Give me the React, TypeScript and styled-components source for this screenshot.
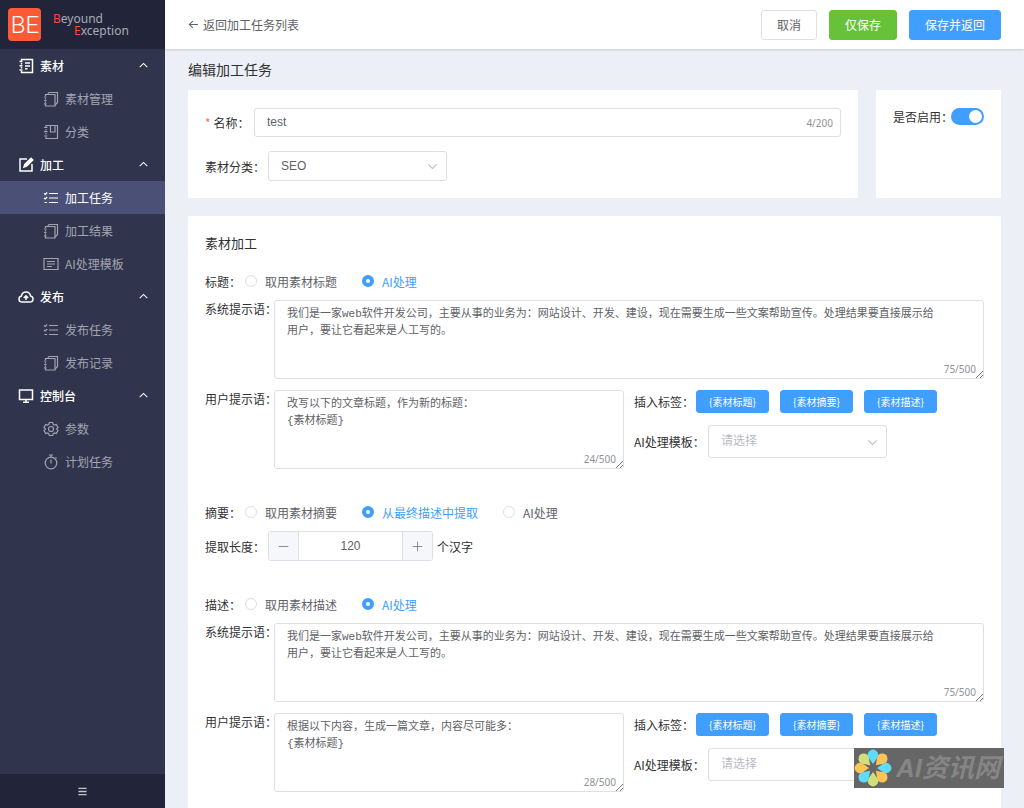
import React, { useId, useState } from "react";
import styled, { createGlobalStyle, css } from "styled-components";

const sans = `"Noto Sans CJK SC", sans-serif`;
const latin = `"Liberation Sans", "Noto Sans CJK SC", sans-serif`;
const mono = `"Liberation Mono", "Noto Sans CJK SC", monospace`;

const GlobalStyle = createGlobalStyle`
  *, *::before, *::after { box-sizing: border-box; }
  body { margin: 0; font: 12px/17px ${sans}; color: #303133; background: #eceff5; }
  button, input, select, textarea { font: inherit; color: inherit; margin: 0; }
  input { font-family: ${latin}; }
`;

const Shell = styled.div`
  display: flex;
  height: 100vh;
  overflow: hidden;
`;

/* ---------- sidebar ---------- */

const Sidebar = styled.aside`
  display: flex;
  flex-direction: column;
  flex: none;
  width: 165px;
  background: #30344d;
  color: #fff;
`;

const Brand = styled.div`
  display: flex;
  align-items: center;
  gap: 12px;
  height: 49px;
  padding: 0 8px;
  background: #22253a;
`;

const Logo = styled.svg`
  width: 33px;
  height: 33px;
  flex: none;
`;

const BrandName = styled.div`
  font: 12px/12px "Noto Sans", sans-serif;
  color: #a9abb5;
  span { display: block; }
  span + span { padding-left: 21px; }
  b { font-weight: 400; color: #f04b3c; }
`;

const Menu = styled.nav`
  flex: 1;
  overflow: hidden;
`;

const GroupButton = styled.button`
  display: flex;
  align-items: center;
  gap: 6px;
  width: 100%;
  height: 33px;
  padding: 0 16px 0 18px;
  border: 0;
  background: none;
  color: #fff;
  font-weight: 500;
  cursor: pointer;
  span { flex: 1; text-align: left; }
`;

const MenuLink = styled.a<{ $active?: boolean }>`
  display: flex;
  align-items: center;
  gap: 6px;
  height: 33px;
  padding-left: 43px;
  text-decoration: none;
  color: ${(p) => (p.$active ? "#fff" : "#a2a4b0")};
  background: ${(p) => (p.$active ? "#4b5176" : "transparent")};
`;

const CollapseButton = styled.button`
  display: flex;
  align-items: center;
  justify-content: center;
  height: 34px;
  border: 0;
  background: #22253a;
  color: #c3c4ca;
`;

const Svg = styled.svg<{ $size: number }>`
  width: ${(p) => p.$size}px;
  height: ${(p) => p.$size}px;
  flex: none;
  fill: none;
  stroke: currentColor;
`;

type IconName =
  | "note" | "copy" | "album" | "edit" | "list" | "card" | "cloud"
  | "monitor" | "gear" | "timer" | "up" | "down" | "back" | "bars" | "minus" | "plus";

const shapes: Record<IconName, React.ReactNode> = {
  note: <path d="M3.500 3V1.500h11v13h-11V13M3.500 5v1.500M3.500 9v1.500M1.500 3.500h3M1.500 7.700h3M1.500 12h3M7 5h5M7 8h5M7 10.800h2.500" />,
  copy: <><path d="M2.500 5V3.500h9.500v11.500H2.500v-1.500M2.500 7v1.500M2.500 10.500v1.500M1 6h2.500M1 9.500h2.500M1 12.800h2.500" /><path d="M4.500 3.500L6 1.500h8.500v10L12 14" /></>,
  album: <path d="M3 3V1.500h11.500v13H3V13M3 5v1.500M3 9v1.500M1 3.500h3.500M1 7.700h3.500M1 12h3.500M7.500 1.500V8H12V1.500" />,
  edit: <><path d="M9 2H2v12h12V7" /><path d="M6 10l.8-2.500L13 1.300l1.800 1.700-6.200 6.200z" fill="currentColor" /></>,
  list: <path d="M6 3.500h9M6 8h9M6 12.500h9M1 3.500l1.200 1L4.200 2.500M1 8l1.200 1L4.200 7M1.500 12.500h2.500" />,
  card: <path d="M1 2.500h14v11H1zM4 5.500h8M4 8h8M4 10.500h5" />,
  cloud: <path d="M4.500 13C2.300 13 1 11.600 1 9.900c0-1.500 1-2.700 2.500-3C3.900 4.500 5.700 3 8 3s4.100 1.500 4.500 3.900c1.500.3 2.500 1.500 2.500 3 0 1.700-1.300 3.100-3.500 3.100zM8 11V7M5.800 9L8 6.800 10.200 9" />,
  monitor: <path d="M1.500 2h13v9.500h-13zM8 11.500V14M5 14.300h6" />,
  gear: <><circle cx="8" cy="8" r="2.500" /><path d="M6.300 1.500h3.400l.5 1.900 1.200.7 1.900-.6L15 6.500 13.600 8 15 9.500l-1.700 3-1.900-.6-1.200.7-.5 1.900H6.300l-.5-1.900-1.200-.7-1.900.6L1 9.500 2.400 8 1 6.500l1.700-3 1.900.6 1.200-.7z" /></>,
  timer: <><circle cx="8" cy="9" r="5.800" /><path d="M6 1h4M8 1v2M8 5.500V9.500M12.500 3.500l1 1" /></>,
  up: <path d="M2.500 10.500L8 5l5.500 5.500" />,
  down: <path d="M2 5L8 11l6-6" />,
  back: <path d="M14.500 8H2M7 3L2 8l5 5" />,
  bars: <path d="M2 3.500h12M2 8h12M2 12.500h12" />,
  minus: <path d="M1 8h14" />,
  plus: <path d="M1 8h14M8 1v14" />,
};

const Icon = ({ name, size = 16, weight = 1 }: { name: IconName; size?: number; weight?: number }) => (
  <Svg $size={size} viewBox="0 0 16 16" strokeWidth={weight} aria-hidden="true">
    {shapes[name]}
  </Svg>
);

const menu: { icon: IconName; label: string; items: { icon: IconName; label: string; active?: boolean }[] }[] = [
  { icon: "note", label: "素材", items: [{ icon: "copy", label: "素材管理" }, { icon: "album", label: "分类" }] },
  {
    icon: "edit",
    label: "加工",
    items: [
      { icon: "list", label: "加工任务", active: true },
      { icon: "copy", label: "加工结果" },
      { icon: "card", label: "AI处理模板" },
    ],
  },
  { icon: "cloud", label: "发布", items: [{ icon: "list", label: "发布任务" }, { icon: "copy", label: "发布记录" }] },
  { icon: "monitor", label: "控制台", items: [{ icon: "gear", label: "参数" }, { icon: "timer", label: "计划任务" }] },
];

/* ---------- page ---------- */

const Main = styled.main`
  display: flex;
  flex-direction: column;
  flex: 1;
  min-width: 0;
`;

const TopBar = styled.header`
  display: flex;
  align-items: center;
  gap: 12px;
  flex: none;
  height: 49px;
  padding: 0 23px;
  background: #fff;
  box-shadow: 0 1px 2px rgba(0, 21, 41, 0.16);
  z-index: 1;
`;

const BackLink = styled.a`
  display: flex;
  align-items: center;
  gap: 4px;
  margin-right: auto;
  color: #606266;
  text-decoration: none;
`;

const Button = styled.button<{ $tone?: "success" | "primary"; $small?: boolean }>`
  height: 30px;
  padding: 0 15px;
  border: 1px solid #dcdfe6;
  border-radius: 3px;
  background: #fff;
  color: #606266;
  white-space: nowrap;
  cursor: pointer;
  ${(p) => p.$tone && css`
    color: #fff;
    background: ${p.$tone === "success" ? "#67c23a" : "#409eff"};
    border-color: ${p.$tone === "success" ? "#67c23a" : "#409eff"};
  `}
  ${(p) => p.$small && css`
    width: 73px;
    height: 23px;
    padding: 0;
    font-size: 10px;
    line-height: 14px;
  `}
`;

const Body = styled.div`
  flex: 1;
  overflow-y: auto;
  scrollbar-width: none;
  padding: 10px 23px 0;
`;

const PageTitle = styled.h1`
  margin: 0 0 11px;
  font-size: 14px;
  line-height: 20px;
  font-weight: 400;
`;

const CardRow = styled.div`
  display: grid;
  grid-template-columns: minmax(0, 1fr) 125px;
  gap: 18px;
  margin-bottom: 18px;
`;

const Card = styled.section`
  padding: 18px 17px 17px;
  background: #fff;
`;

const SectionTitle = styled.h2`
  margin: 0 0 20px;
  font-size: 13px;
  line-height: 17px;
  font-weight: 400;
`;

const FieldRow = styled.div`
  display: flex;
  align-items: center;
  & + & { margin-top: 14px; }
`;

const Label = styled.label<{ $width?: number }>`
  flex: none;
  width: ${(p) => (p.$width ? `${p.$width}px` : "auto")};
  white-space: nowrap;
`;

const Required = styled.span`
  color: #f56c6c;
  margin-right: 3px;
`;

const InputBox = styled.div`
  display: flex;
  align-items: center;
  flex: 1;
  height: 29px;
  padding: 0 7px 0 12px;
  border: 1px solid #dcdfe6;
  border-radius: 3px;
  input { flex: 1; min-width: 0; padding: 0; border: 0; outline: 0; color: #606266; background: none; }
`;

const Count = styled.span`
  font: 10px/14px "Noto Sans", sans-serif;
  color: #909399;
`;

const SelectBox = styled.div<{ $tall?: boolean }>`
  position: relative;
  width: 179px;
  height: ${(p) => (p.$tall ? 33 : 30)}px;
  select {
    appearance: none;
    width: 100%;
    height: 100%;
    padding: 0 30px 0 12px;
    border: 1px solid #dcdfe6;
    border-radius: 3px;
    background: #fff;
    font-family: ${latin};
    color: ${(p) => (p.$tall ? "#b8bbc3" : "#606266")};
  }
  svg { position: absolute; right: 9px; top: calc(50% - 5px); color: #b4b8c0; pointer-events: none; }
`;

const Switch = styled.input`
  appearance: none;
  flex: none;
  width: 33px;
  height: 17px;
  border-radius: 9px;
  background: #dcdfe6;
  cursor: pointer;
  &::before {
    content: "";
    display: block;
    width: 13px;
    height: 13px;
    margin: 2px;
    border-radius: 50%;
    background: #fff;
  }
  &:checked { background: #409eff; }
  &:checked::before { margin-left: 18px; }
`;

const RadioRow = styled.div`
  display: flex;
  align-items: center;
  height: 20px;
  margin-bottom: 9px;
`;

const RadioLabel = styled.label<{ $on: boolean }>`
  display: flex;
  align-items: center;
  gap: 8px;
  margin: 0 21px 0 4px;
  white-space: nowrap;
  color: ${(p) => (p.$on ? "#409eff" : "#606266")};
`;

const Radio = styled.input`
  appearance: none;
  width: 12px;
  height: 12px;
  border: 1px solid #dcdfe6;
  border-radius: 50%;
  background: #fff;
  &:checked { border: 4px solid #409eff; }
`;

const Block = styled.div`
  & + & { margin-top: 33px; }
`;

const PromptRow = styled.div`
  display: flex;
  align-items: flex-start;
  & + & { margin-top: 11px; }
`;

const Split = styled.div`
  display: grid;
  grid-template-columns: 1fr 1fr;
  gap: 10px;
  flex: 1;
`;

const AreaBox = styled.div`
  position: relative;
  flex: 1;
  height: 79px;
  textarea {
    display: block;
    width: 100%;
    height: 100%;
    padding: 5px 12px;
    border: 1px solid #dcdfe6;
    border-radius: 3px;
    outline: 0;
    resize: none;
    overflow: hidden;
    font: 11px/17px ${mono};
    color: #606266;
  }
  ${Count} { position: absolute; right: 8px; bottom: 3px; }
`;

const Grip = styled.svg`
  position: absolute;
  right: 1px;
  bottom: 1px;
  width: 7px;
  height: 7px;
  stroke: #777;
`;

const Side = styled.div`
  display: flex;
  flex-direction: column;
  gap: 12px;
`;

const SideRow = styled.div`
  display: flex;
  align-items: center;
`;

const SideCaption = styled.span`
  flex: none;
  width: 62px;
`;

const Tags = styled.div`
  display: flex;
  gap: 11px;
`;

const Stepper = styled.div`
  display: flex;
  width: 165px;
  height: 30px;
  margin-right: 4px;
  border: 1px solid #dcdfe6;
  border-radius: 3px;
  overflow: hidden;
  button {
    display: flex;
    align-items: center;
    justify-content: center;
    width: 29px;
    padding: 0;
    border: 0;
    background: #f5f7fa;
    color: #606266;
  }
  input {
    flex: 1;
    min-width: 0;
    padding: 0;
    border: solid #dcdfe6;
    border-width: 0 1px;
    text-align: center;
    color: #606266;
  }
`;

const Watermark = styled.div`
  position: fixed;
  right: 20px;
  bottom: 20px;
  display: flex;
  align-items: center;
  gap: 4px;
  width: 150px;
  height: 40px;
  overflow: hidden;
  background: #666;
  color: #858585;
  font: italic 700 26px/36px ${latin};
  white-space: nowrap;
  z-index: 2;
  svg { width: 38px; height: 38px; flex: none; }
`;

const systemPrompt =
  "我们是一家web软件开发公司，主要从事的业务为：网站设计、开发、建设，现在需要生成一些文案帮助宣传。处理结果要直接展示给\n用户，要让它看起来是人工写的。";

const TextArea = ({ id, value, count }: { id: string; value: string; count: string }) => (
  <AreaBox>
    <textarea id={id} defaultValue={value} />
    <Count>{count}</Count>
    <Grip viewBox="0 0 7 7" aria-hidden="true"><path d="M0 7L7 0M4 7l3-3" /></Grip>
  </AreaBox>
);

const RadioField = ({ label, options, initial }: { label: string; options: string[]; initial: number }) => {
  const name = useId();
  const [value, setValue] = useState(initial);
  return (
    <RadioRow role="radiogroup" aria-label={label}>
      <span>{label}：</span>
      {options.map((text, i) => (
        <RadioLabel key={text} $on={i === value}>
          <Radio type="radio" name={name} checked={i === value} onChange={() => setValue(i)} />
          {text}
        </RadioLabel>
      ))}
    </RadioRow>
  );
};

const Prompts = ({ user, count }: { user: string; count: string }) => {
  const id = useId();
  return (
    <>
      <PromptRow>
        <Label $width={69} htmlFor={`${id}s`}>系统提示语：</Label>
        <TextArea id={`${id}s`} value={systemPrompt} count="75/500" />
      </PromptRow>
      <PromptRow>
        <Label $width={69} htmlFor={`${id}u`}>用户提示语：</Label>
        <Split>
          <TextArea id={`${id}u`} value={user} count={count} />
          <Side>
            <SideRow>
              <SideCaption>插入标签：</SideCaption>
              <Tags>
                {["{素材标题}", "{素材摘要}", "{素材描述}"].map((t) => (
                  <Button key={t} type="button" $tone="primary" $small>{t}</Button>
                ))}
              </Tags>
            </SideRow>
            <SideRow>
              <Label $width={74} htmlFor={`${id}t`}>AI处理模板：</Label>
              <SelectBox $tall>
                <select id={`${id}t`}><option>请选择</option></select>
                <Icon name="down" size={11} weight={1.5} />
              </SelectBox>
            </SideRow>
          </Side>
        </Split>
      </PromptRow>
    </>
  );
};

const petals = ["#5fdcf9", "#ffc455", "#5fdcf9", "#ffc455", "#cfe07c", "#5fdcf9", "#ffc455", "#cfe07c"];

export default function App() {
  const [length, setLength] = useState(120);
  return (
    <Shell>
      <GlobalStyle />
      <Sidebar>
        <Brand>
          <Logo viewBox="0 0 33 33" role="img" aria-label="BE">
            <rect width="33" height="33" rx="4" fill="#fb5a35" />
            <text x="17" y="25" textAnchor="middle" fill="#fff" fontSize="24" fontWeight="300" fontFamily="Roboto, sans-serif">BE</text>
          </Logo>
          <BrandName>
            <span><b>B</b>eyound</span>
            <span><b>E</b>xception</span>
          </BrandName>
        </Brand>
        <Menu>
          {menu.map((g) => (
            <div key={g.label}>
              <GroupButton type="button" aria-expanded="true">
                <Icon name={g.icon} weight={1.5} />
                <span>{g.label}</span>
                <Icon name="up" size={11} weight={1.5} />
              </GroupButton>
              {g.items.map((it) => (
                <MenuLink key={it.label} href="#" $active={it.active}>
                  <Icon name={it.icon} weight={1.2} />
                  {it.label}
                </MenuLink>
              ))}
            </div>
          ))}
        </Menu>
        <CollapseButton type="button" aria-label="收起菜单"><Icon name="bars" size={11} weight={2} /></CollapseButton>
      </Sidebar>
      <Main>
        <TopBar>
          <BackLink href="#"><Icon name="back" size={11} weight={1.5} />返回加工任务列表</BackLink>
          <Button type="button">取消</Button>
          <Button type="button" $tone="success">仅保存</Button>
          <Button type="button" $tone="primary">保存并返回</Button>
        </TopBar>
        <Body>
          <PageTitle>编辑加工任务</PageTitle>
          <CardRow>
            <Card>
              <FieldRow>
                <Label $width={49} htmlFor="name"><Required>*</Required>名称：</Label>
                <InputBox>
                  <input id="name" type="text" defaultValue="test" />
                  <Count>4/200</Count>
                </InputBox>
              </FieldRow>
              <FieldRow>
                <Label $width={63} htmlFor="category">素材分类：</Label>
                <SelectBox>
                  <select id="category"><option>SEO</option></select>
                  <Icon name="down" size={11} weight={1.5} />
                </SelectBox>
              </FieldRow>
            </Card>
            <Card>
              <FieldRow>
                <Label $width={58} htmlFor="enabled">是否启用：</Label>
                <Switch id="enabled" type="checkbox" role="switch" defaultChecked />
              </FieldRow>
            </Card>
          </CardRow>
          <Card>
            <SectionTitle>素材加工</SectionTitle>
            <Block>
              <RadioField label="标题" options={["取用素材标题", "AI处理"]} initial={1} />
              <Prompts user={"改写以下的文章标题，作为新的标题：\n{素材标题}"} count="24/500" />
            </Block>
            <Block>
              <RadioField label="摘要" options={["取用素材摘要", "从最终描述中提取", "AI处理"]} initial={1} />
              <FieldRow>
                <Label $width={63} htmlFor="length">提取长度：</Label>
                <Stepper>
                  <button type="button" aria-label="减少" onClick={() => setLength(length - 1)}><Icon name="minus" size={11} /></button>
                  <input id="length" type="text" inputMode="numeric" value={length} onChange={(e) => setLength(Number(e.target.value) || 0)} />
                  <button type="button" aria-label="增加" onClick={() => setLength(length + 1)}><Icon name="plus" size={11} /></button>
                </Stepper>
                <span>个汉字</span>
              </FieldRow>
            </Block>
            <Block>
              <RadioField label="描述" options={["取用素材描述", "AI处理"]} initial={1} />
              <Prompts user={"根据以下内容，生成一篇文章，内容尽可能多：\n{素材标题}"} count="28/500" />
            </Block>
          </Card>
        </Body>
      </Main>
      <Watermark>
        <svg viewBox="-19 -19 38 38" aria-hidden="true">
          {petals.map((c, i) => (
            <path key={i} d="M0-4L-4.500-10.500A5.200 5.200 0 1 1 4.500-10.500z" fill={c} transform={`rotate(${i * 45})`} />
          ))}
        </svg>
        AI资讯网
      </Watermark>
    </Shell>
  );
}
